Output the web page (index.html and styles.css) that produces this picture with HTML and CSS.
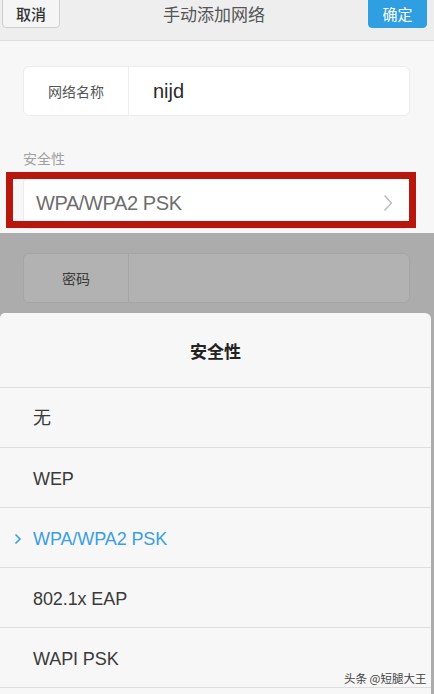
FILE: index.html
```html
<!DOCTYPE html>
<html lang="zh">
<head>
<meta charset="utf-8">
<link rel="stylesheet" href="styles.css">
</head>
<body>
<div class="page">
  <header class="topbar">
    <button class="btn btn-cancel">取消</button>
    <div class="title">手动添加网络</div>
    <button class="btn btn-ok">确定</button>
  </header>
  <main class="form">
    <div class="card">
      <div class="card-label">网络名称</div>
      <div class="card-value">nijd</div>
    </div>
    <div class="section-label">安全性</div>
    <div class="select">
      <span class="select-text">WPA/WPA2 PSK</span>
      <svg class="select-chev" width="10" height="18" viewBox="0 0 10 18"><path d="M1.5 1.5 L8.5 9 L1.5 16.5" fill="none" stroke="#b8b8b8" stroke-width="1.3"/></svg>
    </div>
    <div class="card card-pass">
      <div class="card-label">密码</div>
      <div class="card-value"></div>
    </div>
  </main>
  <div class="highlight"></div>
  <div class="dim"></div>
  <section class="sheet">
    <div class="sheet-title">安全性</div>
    <ul class="options">
      <li class="option cjk">无</li>
      <li class="option">WEP</li>
      <li class="option selected"><svg class="check" width="8" height="12" viewBox="0 0 8 12"><path d="M1.5 1.5 L6 6 L1.5 10.5" fill="none" stroke="#3a9fe0" stroke-width="1.6"/></svg>WPA/WPA2 PSK</li>
      <li class="option">802.1x EAP</li>
      <li class="option">WAPI PSK</li>
      <li class="option"></li>
    </ul>
  </section>
  <div class="watermark">头条 @短腿大王</div>
</div>
</body>
</html>
```

FILE: styles.css
```css
* { box-sizing: border-box; }
html, body { margin: 0; padding: 0; }
body {
  font-family: "Liberation Sans", "Noto Sans CJK SC", sans-serif;
  background: #f7f7f7;
}
.page {
  position: relative;
  width: 434px;
  height: 694px;
  overflow: hidden;
  background: #f7f7f7;
}
.topbar {
  height: 41px;
  background: #eeeeee;
  border-bottom: 1px solid #dddddd;
  display: flex;
  align-items: flex-start;
  padding: 0 7px 0 2px;
}
.btn {
  font-family: "Noto Sans CJK SC", sans-serif;
  font-size: 15px;
  height: 29px;
  border-radius: 0 0 4px 4px;
  padding: 0;
  line-height: 27px;
  margin-top: -1px;
  flex: none;
}
.btn-cancel {
  width: 58px;
  background: #f5f5f5;
  color: #333;
  border: 1px solid #cfcfcf;
  font-weight: 500;
}
.btn-ok {
  width: 59px;
  background: #2f9fe2;
  border: 1px solid #2f9fe2;
  color: #fff;
}
.title {
  flex: 1;
  text-align: center;
  font-family: "Noto Sans CJK SC", sans-serif;
  font-size: 17px;
  color: #555;
  line-height: 28px;
}
.form {
  padding: 25px 24px 0 23px;
}
.card {
  height: 50px;
  background: #fff;
  border: 1px solid #ececec;
  border-radius: 6px;
  display: flex;
  align-items: stretch;
}
.card-label {
  width: 105px;
  border-right: 1px solid #ededed;
  font-family: "Noto Sans CJK SC", sans-serif;
  font-size: 14px;
  color: #555;
  display: flex;
  align-items: center;
  justify-content: center;
}
.card-value {
  flex: 1;
  font-size: 20px;
  color: #2a2a2a;
  padding-left: 24px;
  display: flex;
  align-items: center;
}
.section-label {
  font-family: "Noto Sans CJK SC", sans-serif;
  font-size: 14px;
  color: #a0a0a0;
  margin-top: 33px;
  line-height: 18px;
}
.select {
  margin-top: 10px;
  height: 52px;
  background: #fff;
  border: 1px solid #ececec;
  border-radius: 6px;
  display: flex;
  align-items: center;
  justify-content: space-between;
  padding: 0 16px 0 12px;
}
.select-text {
  font-size: 20px;
  color: #6e6e6e;
  letter-spacing: -0.4px;
}
.card-pass {
  margin-top: 24px;
  height: 50px;
}
.highlight {
  position: absolute;
  left: 6px;
  top: 172px;
  width: 410px;
  height: 56px;
  border: 7px solid #b8170e;
}
.dim {
  position: absolute;
  left: 0;
  top: 233px;
  width: 434px;
  bottom: 0;
  background: rgba(0, 0, 0, 0.3);
}
.sheet {
  position: absolute;
  left: 0;
  top: 313px;
  width: 431px;
  bottom: 0;
  background: #f7f7f7;
  border-radius: 5px 6px 0 0;
}
.sheet-title {
  height: 74px;
  display: flex;
  align-items: center;
  justify-content: center;
  font-family: "Noto Sans CJK SC", sans-serif;
  font-size: 17px;
  font-weight: 700;
  color: #222;
}
.options {
  list-style: none;
  margin: 0;
  padding: 0;
}
.option {
  height: 60px;
  border-top: 1px solid #dedede;
  display: flex;
  align-items: center;
  padding-left: 33px;
  padding-top: 4px;
  font-family: "Liberation Sans", "Noto Sans CJK SC", sans-serif;
  font-size: 18px;
  color: #3a3a3a;
  position: relative;
  letter-spacing: -0.1px;
}
.option.cjk {
  padding-top: 0;
  padding-bottom: 4px;
}
.option.selected {
  color: #3a9fe0;
}
.check {
  position: absolute;
  left: 14px;
  top: 25px;
}
.watermark {
  position: absolute;
  left: 344px;
  top: 670px;
  font-family: "Noto Sans CJK SC", sans-serif;
  font-size: 11.5px;
  color: #444;
  white-space: nowrap;
}
```
